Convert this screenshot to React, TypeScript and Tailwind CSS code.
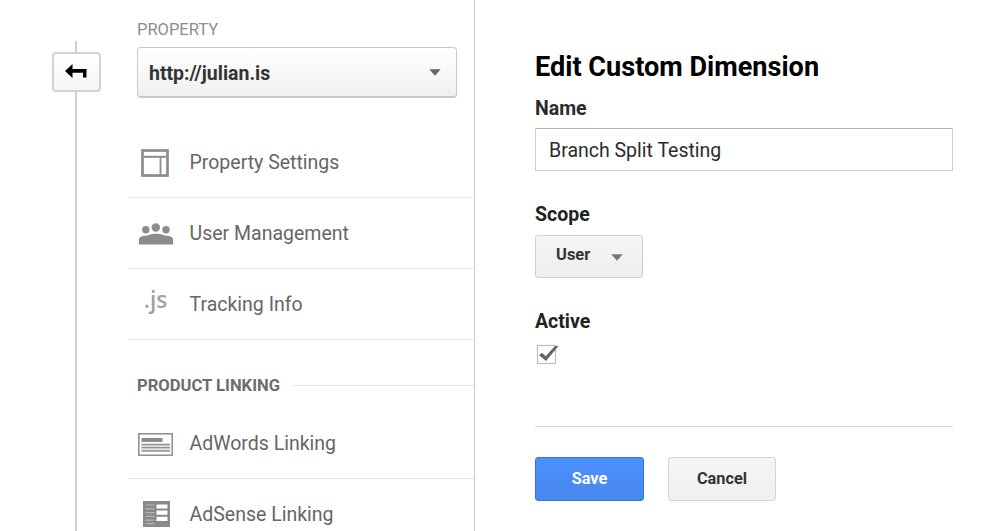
import type { ReactNode } from "react";

function SettingsIcon() {
  return (
    <svg width="28" height="28" viewBox="0 0 28 28" fill="none" stroke="#8c8c8c">
      <rect x="1.5" y="1.5" width="25" height="25" strokeWidth="2.7" />
      <path d="M3 7.8H25" strokeWidth="2" />
      <path d="M19.5 8V25" strokeWidth="1.8" />
    </svg>
  );
}

function UsersIcon() {
  return (
    <svg width="34" height="22" viewBox="0 0 34 22" fill="#8c8c8c">
      <circle cx="6.8" cy="6.8" r="3.7" />
      <circle cx="16.8" cy="4.5" r="4.2" />
      <circle cx="27" cy="6.8" r="3.7" />
      <path d="M0 21.5V15.5C1 13.3 4 12.4 8.5 12.4C11 11.4 13.5 10.8 17 10.8C20.5 10.8 23 11.4 25.5 12.4C30 12.4 33 13.3 34 15.5V21.5Z" />
    </svg>
  );
}

function AdWordsIcon() {
  return (
    <svg width="35" height="23" viewBox="0 0 35 23" fill="none" stroke="#929292">
      <rect x="0.8" y="0.8" width="33.4" height="21.4" strokeWidth="1.6" />
      <rect x="3.5" y="11" width="28.5" height="7.5" fill="#dedede" stroke="none" />
      <path d="M3.5 7H24.5" strokeWidth="4" stroke="#8c8c8c" />
      <path d="M3.5 11.5H32M3.5 14.7H32M3.5 18H32" strokeWidth="1.3" />
    </svg>
  );
}

function AdSenseIcon() {
  return (
    <svg width="27" height="26" viewBox="0 0 27 26">
      <rect width="27" height="26" fill="#898989" />
      <path d="M2.5 4H11.5M2.5 7.8H11.5M2.5 11.6H11.5M2.5 15.4H11.5M2.5 19.2H11.5M2.5 22.7H11.5" stroke="#b5b5b5" strokeWidth="1.2" />
      <path d="M13.5 3.5H24.5V7.6H13.5ZM13.5 9.5H24.5V13.8H13.5ZM13.5 15.7H24.5V20H13.5Z" fill="#fff" />
    </svg>
  );
}

function Caret({ color }: { color: string }) {
  return (
    <svg width="12" height="7" viewBox="0 0 12 7" fill={color}>
      <path d="M0.3 0.3H11.7L6 6.7Z" />
    </svg>
  );
}

function Row({ icon, label }: { icon: ReactNode; label: string }) {
  return (
    <div className="flex h-[71px] shrink-0 items-center border-b border-[#e9e9e9]">
      <div className="flex w-[55px] shrink-0 items-center justify-center">{icon}</div>
      <span className="ml-[6.5px] whitespace-nowrap pt-[1.5px] text-[19.5px] text-[#666]">{label}</span>
    </div>
  );
}

export default function App() {
  return (
    <div className="flex h-[531px] w-[1000px] overflow-hidden bg-white font-['Roboto',sans-serif]">
      <div className="flex w-[128px] shrink-0 flex-col pt-[41px]">
        <div className="ml-[75px] h-[11px] w-[2px] bg-[#d0d0d0]" />
        <button className="ml-[52px] flex h-[40px] w-[49px] shrink-0 items-center justify-center rounded-[4px] border-2 border-[#d3d3d3] bg-linear-to-b from-white to-[#f4f4f4]">
          <svg width="22" height="14" viewBox="0 0 22 14" className="-ml-px -mt-[3px]">
            <path d="M0 7L7.5 0V5H21.5V13.5H18V8.8H7.5V14Z" fill="#000" />
          </svg>
        </button>
        <div className="ml-[75px] w-[2px] flex-1 bg-[#d0d0d0]" />
      </div>

      <div className="flex w-[347px] shrink-0 flex-col border-r border-[#cecece] pt-[19px]">
        <div className="ml-[9px] h-[20px] pt-px text-[16.5px] leading-[20px] text-[#8e8e8e]">PROPERTY</div>
        <button className="ml-[9px] mt-[8px] flex h-[51px] w-[320px] shrink-0 items-center justify-between rounded-[4px] border border-b-2 border-[#c8c8c8] bg-linear-to-b from-white to-[#f0f0f0] pl-[11px] pr-[15px]">
          <span className="pt-[3px] text-[19.5px] font-bold text-[#333]">http://julian.is</span>
          <Caret color="#666" />
        </button>
        <div className="mt-[29px] flex flex-col">
          <Row icon={<span className="pr-[2px] pt-px"><SettingsIcon /></span>} label="Property Settings" />
          <Row icon={<span className="pt-[2px]"><UsersIcon /></span>} label="User Management" />
          <Row
            icon={<span className="-mt-[7px] font-['Open_Sans',sans-serif] text-[22.5px] font-semibold leading-none text-[#a2a2a2]">.js</span>}
            label="Tracking Info"
          />
        </div>
        <div className="flex h-[68px] shrink-0 items-center pt-[23px]">
          <span className="ml-[9px] whitespace-nowrap pt-[2px] text-[16.6px] font-bold text-[#6d6d6d]">PRODUCT LINKING</span>
          <span className="ml-[13px] h-px flex-1 bg-[#e9e9e9]" />
        </div>
        <Row icon={<span className="pt-[2px]"><AdWordsIcon /></span>} label="AdWords Linking" />
        <Row icon={<span className="pl-px"><AdSenseIcon /></span>} label="AdSense Linking" />
      </div>

      <div className="flex flex-col pl-[60px] pt-[50px]">
        <h1 className="h-[32px] whitespace-nowrap pt-px text-[27.1px] font-bold leading-[32px] text-black">Edit Custom Dimension</h1>
        <label className="mt-[14px] h-[24px] pt-px text-[19.5px] font-bold leading-[24px] text-[#2b2b2b]">Name</label>
        <div className="mt-[8px] flex h-[43px] w-[418px] items-center border border-[#cfcfcf] border-t-[#b5b5b5] pl-[13px] pt-[2px] text-[19.5px] text-[#2b2b2b]">
          Branch Split Testing
        </div>
        <label className="mt-[31px] h-[24px] pt-px text-[19.5px] font-bold leading-[24px] text-[#222]">Scope</label>
        <button className="mt-[9px] flex h-[43px] w-[108px] items-center rounded-[3px] border border-[#d0d0d0] bg-linear-to-b from-[#f5f5f5] to-[#eee] pl-[20px]">
          <span className="-mt-[3px] w-[55px] text-left text-[16.5px] font-bold text-[#333]">User</span>
          <span className="mt-[1px]"><Caret color="#777" /></span>
        </button>
        <label className="mt-[31px] h-[24px] pt-px text-[19.5px] font-bold leading-[24px] text-[#222]">Active</label>
        <svg width="24" height="22" viewBox="0 0 24 22" className="mt-[10px]">
          <rect x="2.5" y="2.5" width="18" height="18" fill="#fff" stroke="#bcbcbc" strokeWidth="1.2" />
          <path d="M4 12.2L7 9.7L10.6 13.2L20 3H23.5L11 18Z" fill="#666" />
        </svg>
        <div className="mt-[61px] h-px w-[418px] bg-[#d6d6d6]" />
        <div className="mt-[30px] flex gap-[24px]">
          <button className="h-[44px] w-[109px] rounded-[3px] border border-[#2f75ee] bg-linear-to-b from-[#4d90fe] to-[#4787ed] text-[16.3px] font-bold text-white">Save</button>
          <button className="h-[44px] w-[108px] rounded-[3px] border border-[#d4d4d4] bg-linear-to-b from-[#f5f5f5] to-[#f0f0f0] text-[16.3px] font-bold text-[#333]">Cancel</button>
        </div>
      </div>
    </div>
  );
}
